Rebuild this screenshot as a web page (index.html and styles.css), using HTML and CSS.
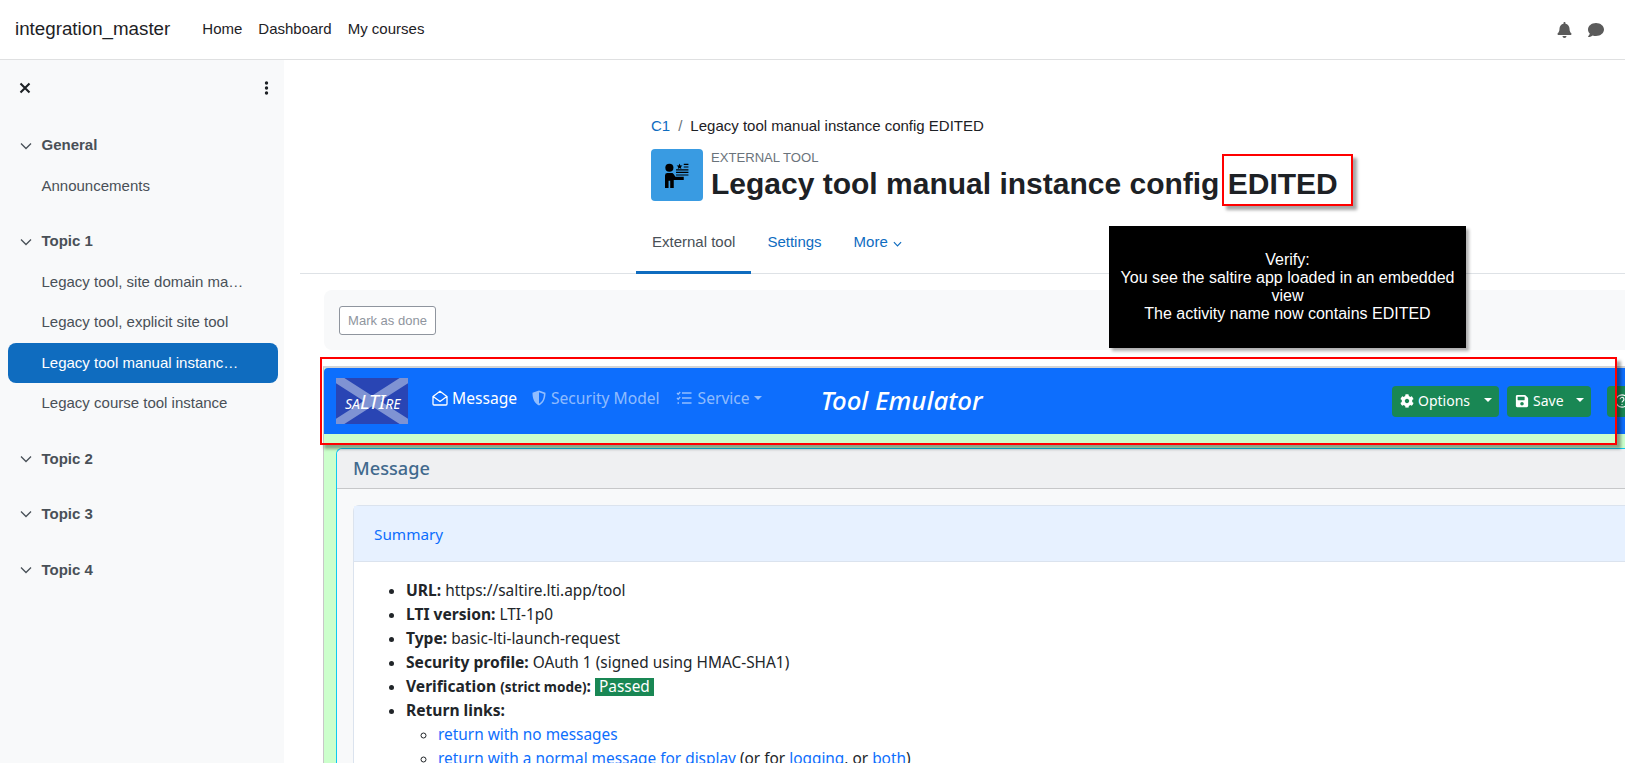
FILE: index.html
```html
<!DOCTYPE html>
<html lang="en">
<head>
<meta charset="utf-8">
<title>Legacy tool manual instance config EDITED</title>
<link rel="stylesheet" href="styles.css">
</head>
<body>
<header class="topbar">
  <a class="brand">integration_master</a>
  <nav class="topnav"><a>Home</a><a>Dashboard</a><a>My courses</a></nav>
  <div class="topicons">
    <svg class="ico-bell" viewBox="0 0 448 512"><path d="M224 512c35.32 0 63.97-28.65 63.97-64H160.03c0 35.35 28.65 64 63.97 64zm215.39-149.71c-19.32-20.76-55.47-51.99-55.47-154.29 0-77.7-54.48-139.9-127.94-155.16V32c0-17.67-14.32-32-31.98-32s-31.98 14.33-31.98 32v20.84C118.56 68.1 64.08 130.3 64.08 208c0 102.3-36.15 133.53-55.47 154.29-6 6.45-8.66 14.16-8.61 21.71.11 16.4 12.98 32 32.1 32h383.8c19.12 0 32-15.6 32.1-32 .05-7.55-2.61-15.27-8.61-21.71z"/></svg>
    <svg class="ico-comment" viewBox="0 0 512 512"><path d="M256 32C114.6 32 0 125.1 0 240c0 49.6 21.4 95 57 130.7C44.5 421.1 2.7 466 2.2 466.5c-2.2 2.3-2.8 5.7-1.5 8.7S4.8 480 8 480c66.3 0 116-31.8 140.6-51.4 32.7 12.3 69 19.4 107.4 19.4 141.4 0 256-93.1 256-208S397.4 32 256 32z"/></svg>
  </div>
</header>
<div class="layout">
  <aside class="sidebar">
    <div class="side-tools">
      <svg class="ico-x" viewBox="0 0 12 12"><path d="M1.5 1.5l9 9M10.5 1.5l-9 9"/></svg>
      <svg class="ico-dots" viewBox="0 0 4 14"><circle cx="2" cy="2" r="1.7"/><circle cx="2" cy="7" r="1.7"/><circle cx="2" cy="12" r="1.7"/></svg>
    </div>
    <div class="section first"><svg class="chev" viewBox="0 0 12 8"><path d="M1 1.5l5 5 5-5"/></svg><span>General</span></div>
    <a class="item">Announcements</a>
    <div class="section gap-a"><svg class="chev" viewBox="0 0 12 8"><path d="M1 1.5l5 5 5-5"/></svg><span>Topic 1</span></div>
    <a class="item">Legacy tool, site domain ma…</a>
    <a class="item">Legacy tool, explicit site tool</a>
    <a class="item active">Legacy tool manual instanc…</a>
    <a class="item">Legacy course tool instance</a>
    <div class="section gap-b"><svg class="chev" viewBox="0 0 12 8"><path d="M1 1.5l5 5 5-5"/></svg><span>Topic 2</span></div>
    <div class="section gap-c"><svg class="chev" viewBox="0 0 12 8"><path d="M1 1.5l5 5 5-5"/></svg><span>Topic 3</span></div>
    <div class="section gap-d"><svg class="chev" viewBox="0 0 12 8"><path d="M1 1.5l5 5 5-5"/></svg><span>Topic 4</span></div>
  </aside>
  <main class="main">
    <div class="pagehead">
      <div class="crumbs"><a class="link">C1</a><span class="sep">/</span><span>Legacy tool manual instance config EDITED</span></div>
      <div class="titlerow">
        <div class="acticon">
          <svg viewBox="0 0 24 24"><circle cx="4.2" cy="4.5" r="3.900"/><path d="M0 12a2.300 2.300 0 0 1 2.300-2.300h4c1 0 1.600.5 2.100 1.200L10 13.200h8v3H8.400V24H5v-7H3.400v7H0z"/><path d="M14 .5l.8 1.800 2 .2-1.500 1.300.4 2-1.700-1-1.700 1 .4-2-1.500-1.300 2-.2zM18 .8h4.500v1.100H18zM18 3.300h4.500v1.100H18zM10.600 6h11.900v1.100H10.600zM10.600 8.500h11.900v1.100H10.600zM10.600 11h11.900v1.100H10.600z"/></svg>
        </div>
        <div class="titletext">
          <div class="eyebrow">EXTERNAL TOOL</div>
          <h1>Legacy tool manual instance config EDITED</h1>
        </div>
      </div>
    </div>
    <nav class="tabs">
      <a class="tab current">External tool</a>
      <a class="tab">Settings</a>
      <a class="tab">More <svg class="tabchev" viewBox="0 0 10 6"><path d="M1 1l4 4 4-4"/></svg></a>
    </nav>
    <div class="completion"><button class="markdone">Mark as done</button></div>
    <div class="frame">
      <div class="appnav">
        <div class="logo">
          <svg class="logo-x" viewBox="0 0 72 46" preserveAspectRatio="none"><path d="M0 0L72 46M72 0L0 46"/></svg>
          <span class="logo-text"><small>SA</small>LTI<small>RE</small></span>
        </div>
        <a class="navlink on">
          <svg class="nicon" viewBox="0 0 16 16"><path d="M1 6.600L8 1.200l7 5.400V14a1 1 0 0 1-1 1H2a1 1 0 0 1-1-1zM1.500 6.800L8 11.500l6.500-4.700"/></svg>Message</a>
        <a class="navlink">
          <svg class="nicon fill" viewBox="0 0 16 16"><path d="M8 .5l6.500 2.300c0 6-1.800 10.400-6.500 12.700C3.300 13.200 1.500 8.800 1.500 2.800zM8 2.200v11.500c3.400-1.900 4.800-5.200 4.900-9.800z" fill-rule="evenodd"/></svg>Security Model</a>
        <a class="navlink service">
          <svg class="nicon" viewBox="0 0 16 16"><path d="M1 3l1.200 1.200L4.200 2M1 8l1.200 1.200L4.200 7M6 3h9.500M6 8h9.500M6 13h9.500M1.500 13h1.500"/></svg>Service<i class="caret"></i></a>
        <div class="apptitle">Tool Emulator</div>
        <div class="btns">
          <div class="btn options">
            <svg class="bicon" viewBox="0 0 512 512"><path d="M487.4 315.700l-42.600-24.600c4.300-23.200 4.300-47 0-70.200l42.600-24.600c4.900-2.800 7.100-8.600 5.500-14-11.100-35.600-30-67.800-54.700-94.600-3.800-4.100-10-5.100-14.800-2.300L380.800 110c-17.900-15.400-38.500-27.300-60.800-35.100V25.800c0-5.600-3.900-10.500-9.400-11.700-36.700-8.200-74.300-7.800-109.200 0-5.500 1.200-9.400 6.100-9.400 11.700V75c-22.200 7.900-42.800 19.800-60.800 35.100L88.700 85.500c-4.900-2.800-11-1.900-14.800 2.300-24.700 26.700-43.600 58.900-54.700 94.600-1.700 5.400.6 11.200 5.500 14L67.300 221c-4.300 23.200-4.300 47 0 70.200l-42.600 24.600c-4.900 2.800-7.100 8.600-5.500 14 11.100 35.600 30 67.800 54.700 94.600 3.800 4.100 10 5.100 14.800 2.300l42.600-24.600c17.900 15.400 38.500 27.300 60.800 35.100v49.200c0 5.600 3.900 10.500 9.400 11.700 36.700 8.200 74.300 7.800 109.200 0 5.500-1.200 9.400-6.100 9.400-11.700v-49.200c22.200-7.900 42.800-19.800 60.800-35.100l42.600 24.600c4.900 2.800 11 1.900 14.800-2.300 24.700-26.700 43.600-58.900 54.700-94.600 1.500-5.500-.7-11.300-5.600-14.100zM256 336c-44.100 0-80-35.900-80-80s35.900-80 80-80 80 35.900 80 80-35.900 80-80 80z"/></svg>
            <span>Options</span><i class="caret big"></i>
          </div>
          <div class="btn save">
            <svg class="bicon" viewBox="0 0 448 512"><path d="M433.941 129.941l-83.882-83.882A48 48 0 0 0 316.118 32H48C21.490 32 0 53.490 0 80v352c0 26.510 21.490 48 48 48h352c26.510 0 48-21.490 48-48V163.882a48 48 0 0 0-14.059-33.941zM224 416c-35.346 0-64-28.654-64-64 0-35.346 28.654-64 64-64s64 28.654 64 64c0 35.346-28.654 64-64 64zm96-304.520V212c0 6.627-5.373 12-12 12H76c-6.627 0-12-5.373-12-12V108c0-6.627 5.373-12 12-12h228.520c3.183 0 6.235 1.264 8.485 3.515l3.480 3.480A11.996 11.996 0 0 1 320 111.480z"/></svg>
            <span>Save</span><i class="caret big"></i>
          </div>
          <div class="btn help">
            <svg class="bicon line" viewBox="0 0 16 16"><circle cx="8" cy="8" r="7"/><path d="M5.800 6a2.200 2.200 0 1 1 3.400 1.900c-.8.5-1.200.9-1.200 1.900M8 11.500v1"/></svg>
          </div>
        </div>
      </div>
      <div class="framebody">
        <section class="card">
          <div class="card-head">Message</div>
          <div class="card-body">
            <div class="inner">
              <div class="inner-head">Summary</div>
              <div class="inner-body">
                <ul class="list">
                  <li><b>URL:</b> https://saltire.lti.app/tool</li>
                  <li><b>LTI version:</b> LTI-1p0</li>
                  <li><b>Type:</b> basic-lti-launch-request</li>
                  <li><b>Security profile:</b> OAuth 1 (signed using HMAC-SHA1)</li>
                  <li><b>Verification <small>(strict mode)</small>:</b> <span class="passed">Passed</span></li>
                  <li><b>Return links:</b>
                    <ul class="sublist">
                      <li><a class="alink">return with no messages</a></li>
                      <li><a class="alink">return with a normal message for display</a> (or for <a class="alink">logging</a>, or <a class="alink">both</a>)</li>
                    </ul>
                  </li>
                </ul>
              </div>
            </div>
          </div>
        </section>
      </div>
    </div>
  </main>
</div>
<div class="mark mark-title"></div>
<div class="mark mark-nav"></div>
<div class="tip">Verify:<br>You see the saltire app loaded in an embedded view<br>The activity name now contains EDITED</div>
</body>
</html>
```
FILE: styles.css
```css
* { box-sizing: border-box; }
html, body { height: 100%; }
body {
  margin: 0;
  height: 763px;
  overflow: hidden;
  background: #fff;
  color: #1d2125;
  font: 15px/22.5px "Liberation Sans", Arial, sans-serif;
}
a { text-decoration: none; }
.topbar {
  height: 60px;
  display: flex;
  align-items: center;
  padding: 0 21px 0 15px;
  border-bottom: 1px solid #dfe0e1;
}
.brand { font-size: 18.75px; margin-right: 32px; }
.topnav { display: flex; gap: 16px; }
.topicons { margin-left: auto; display: flex; gap: 16px; align-items: center; fill: #5b5b5b; }
.ico-bell { width: 15px; height: 16px; }
.ico-comment { width: 16px; height: 16px; }
.layout { display: flex; height: 703px; }
.sidebar {
  width: 284px;
  flex: none;
  background: #f8f9fa;
  padding: 0 6px 0 8px;
  color: #495057;
}
.side-tools {
  height: 56px;
  display: flex;
  justify-content: space-between;
  align-items: center;
  padding: 0 9px 0 11px;
}
.ico-x { width: 12px; height: 12px; fill: none; stroke: #1d2125; stroke-width: 2.100; }
.ico-dots { width: 5px; height: 14px; fill: #1d2125; }
.section { display: flex; align-items: center; font-weight: 700; height: 23px; padding-left: 12px; color: #495057; }
.section.first { margin-top: 18px; }
.section.gap-a { margin-top: 24px; }
.section.gap-b { margin-top: 25px; }
.section.gap-c { margin-top: 31.500px; }
.section.gap-d { margin-top: 33px; }
.chev { width: 12px; height: 8px; margin-right: 9.500px; fill: none; stroke: #495057; stroke-width: 1.300; }
.item { display: block; height: 40.200px; line-height: 40px; padding-left: 33.500px; border-radius: 8px; color: #495057; }
.section + .item { margin-top: 9px; }
.item.active { background: #0f6cbf; color: #fff; }
.main { flex: 1; min-width: 0; padding-left: 16px; }
.pagehead { padding: 55px 0 0 351px; }
.crumbs { display: flex; gap: 8px; height: 23px; }
.link { color: #0f6cbf; }
.sep { color: #6a737b; }
.titlerow { display: flex; margin-top: 11px; }
.acticon { width: 52px; height: 52px; background: #399be2; border-radius: 4px; display: flex; align-items: center; justify-content: center; }
.acticon svg { width: 25px; height: 25px; fill: #000; }
.titletext { margin-left: 8px; }
.eyebrow { font-size: 13.100px; line-height: 15px; color: #6a737b; margin-top: 1px; }
h1 { margin: 1px 0 0; font-size: 30px; line-height: 36px; font-weight: 700; }
.tabs { display: flex; height: 57px; margin-top: 15px; border-bottom: 1px solid #dee2e6; padding: 6px 0 0 336px; }
.tab { padding: 8px 16px; height: 51px; color: #0f6cbf; }
.tab.current { color: #495057; border-bottom: 3px solid #0f6cbf; }
.tabchev { width: 9px; height: 6px; fill: none; stroke: #0f6cbf; stroke-width: 1.300; margin-left: 1px; }
.completion { margin: 16px 0 0 24px; height: 60px; background: #f8f9fa; padding: 16px 0 0 15px; border-radius: 8px 0 0 8px; }
.markdone {
  width: 97px;
  height: 29px;
  padding: 0;
  background: #fff;
  border: 1px solid #8f959e;
  border-radius: 3px;
  color: #8f959e;
  font: 13px "Liberation Sans", Arial, sans-serif;
}
.frame {
  margin: 16px 0 0 23px;
  border-top: 2px solid #d4d4d4;
  border-left: 1px solid #c8c8c8;
  background: #ccffcc;
  height: 420px;
  overflow: hidden;
  font-family: "Noto Sans", "Open Sans", sans-serif;
  font-size: 15.400px;
  line-height: 24px;
}
.appnav {
  height: 66px;
  width: 1343px;
  background: #0d6efd;
  display: flex;
  align-items: center;
  padding-left: 12px;
  border-radius: 4px 0 0 0;
}
.logo { position: relative; width: 72px; height: 46px; background: #2945b4; margin-right: 24px; flex: none; }
.logo-x { position: absolute; inset: 0; width: 100%; height: 100%; fill: none; stroke: #7f93d3; stroke-width: 9; }
.logo-text {
  position: absolute;
  left: 9px;
  top: 8px;
  color: #fff;
  font-size: 20px;
  line-height: 32px;
  font-style: italic;
}
.logo-text small { font-size: 14px; }
.navlink { display: flex; align-items: center; color: rgba(255,255,255,.55); margin: -7px 16px 0 0; font-size: 15.600px; }
.navlink.on { color: #fff; margin-right: 14px; }
.service .nicon { margin-right: 6px; }
.nicon { width: 16px; height: 16px; margin-right: 4px; fill: none; stroke: currentColor; stroke-width: 1.300; }
.nicon.fill { fill: currentColor; stroke: none; }
.caret { display: inline-block; margin-left: 4px; border: 4px solid transparent; border-top-color: currentColor; border-bottom: 0; }
.apptitle { margin: -2px 0 0 43px; color: #fff; font-size: 25.800px; font-style: italic; font-weight: 500; }
.btns { margin-left: auto; display: flex; gap: 8px; flex: none; }
.btn { display: flex; align-items: center; height: 31px; padding: 0 7px 0 8px; background: #198754; color: #fff; font-size: 14px; border-radius: 4px; }
.options { width: 107px; }
.save { width: 84px; }
.bicon { width: 14px; height: 14px; fill: #fff; margin-right: 4px; flex: none; }
.bicon.line { fill: none; stroke: #fff; stroke-width: 1.300; }
.caret.big { margin-left: auto; border-width: 4px; border-bottom: 0; margin-top: -2px; }
.help { width: 60px; margin-left: 8px; }
.framebody { padding: 14px 0 0 12px; }
.card { border: 1px solid #0dcaf0; border-right: 0; border-radius: 6px 0 0 0; background: #f8f9fa; width: 1400px; }
.card-head { height: 40px; padding: 7px 16px; background: #eff0f2; border-bottom: 1px solid #c6c7c9; color: #41698d; font-size: 18.200px; font-weight: 500; line-height: 24px; border-radius: 6px 0 0 0; }
.card-body { padding: 16px 0 0 16px; }
.inner { border: 1px solid #dbe3ee; border-radius: 6px 0 0 0; background: #fff; }
.inner-head { height: 56px; padding: 16px 20px; background: #e7f1ff; border-bottom: 1px solid #dbe3ee; color: #0d6efd; font-size: 15.300px; }
.inner-body { padding: 17px 20px; color: #212529; }
.list { margin: 0; padding-left: 32px; }
.list b { font-size: 15.600px; line-height: 1; }
.sublist { padding-left: 32px; list-style: circle; }
.list small { font-size: 13.500px; line-height: 1; }
.passed { display: inline-block; height: 18px; line-height: 18px; background: #198754; color: #fff; padding: 0 4px; }
.alink { color: #0d6efd; }
.mark { position: absolute; border: 2px solid #f00; box-shadow: 4px 4px 3px rgba(0,0,0,.35); }
.mark-title { left: 1222px; top: 154px; width: 131px; height: 52px; }
.mark-nav { left: 320px; top: 357px; width: 1297px; height: 88px; }
.tip {
  position: absolute;
  left: 1109px;
  top: 226px;
  width: 357px;
  height: 122px;
  padding: 25px 8px;
  background: #000;
  color: #fff;
  font: 16px/18px "Liberation Sans", Arial, sans-serif;
  text-align: center;
  box-shadow: 3px 3px 3px rgba(0,0,0,.3);
}
```
